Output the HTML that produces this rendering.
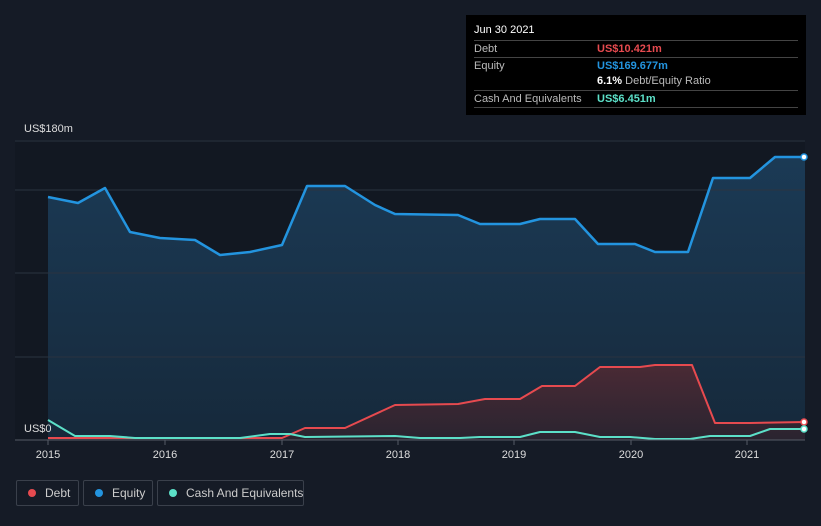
<!DOCTYPE html>
<html><head><style>
body{margin:0;width:821px;height:526px;background:#151b26;font-family:"Liberation Sans",sans-serif;overflow:hidden;position:relative}
.tt{position:absolute;left:466px;top:15px;width:340px;height:100px;background:#000;color:#bbb;font-size:11px}
.row{position:absolute;left:8px;width:324px;border-top:1px solid #444;height:16px;line-height:16px}
.leg{position:absolute;top:480px;height:26px;border:1px solid #3a404b;border-radius:2px;color:#ccc;font-size:12px;line-height:24px;box-sizing:border-box;padding-left:28px;white-space:nowrap}
.leg i{position:absolute;left:11px;top:8px;width:8px;height:8px;border-radius:50%}
</style></head><body>
<svg width="821" height="526" style="position:absolute;left:0;top:0">
<defs><linearGradient id="g" x1="0" y1="0" x2="0" y2="1"><stop offset="0" stop-color="#1b3a55"/><stop offset="1" stop-color="#16293b"/></linearGradient>
<linearGradient id="r" x1="0" y1="0" x2="0" y2="1"><stop offset="0" stop-color="#4a2a35"/><stop offset="1" stop-color="#2a2430"/></linearGradient></defs>
<rect x="15" y="140" width="790" height="300" fill="#121822"/>
<polygon fill="url(#g)" points="48,197 78,203 105,188 130,232 160,238 195,240 220,255 250,252 282,245 307,186 345,186 375,205 395,214 458,215 480,224 520,224 540,219 575,219 598,244 635,244 655,252 688,252 713,178 750,178 775,157 805,157 805,440 48,440"/>
<g stroke="#2b3340" stroke-width="1"><line x1="15" y1="141" x2="805" y2="141"/><line x1="15" y1="190" x2="805" y2="190"/><line x1="15" y1="273" x2="805" y2="273"/><line x1="15" y1="357" x2="805" y2="357"/></g>
<polygon fill="url(#r)" points="48,438 282,438 305,428 345,428 395,405 458,404 485,399 520,399 542,386 575,386 600,367 640,367 655,365 692,365 715,423 750,423 805,422 805,440 48,440"/>
<polyline fill="none" stroke="#2394df" stroke-width="2.5" stroke-linejoin="round" points="48,197 78,203 105,188 130,232 160,238 195,240 220,255 250,252 282,245 307,186 345,186 375,205 395,214 458,215 480,224 520,224 540,219 575,219 598,244 635,244 655,252 688,252 713,178 750,178 775,157 805,157"/>
<polyline fill="none" stroke="#e64a4f" stroke-width="2" stroke-linejoin="round" points="48,438 282,438 305,428 345,428 395,405 458,404 485,399 520,399 542,386 575,386 600,367 640,367 655,365 692,365 715,423 750,423 805,422"/>
<polyline fill="none" stroke="#5ce0c8" stroke-width="2" stroke-linejoin="round" points="48,420 75,436 110,436 135,438 240,438 270,434 290,434 305,437 395,436 420,438 460,438 480,437 520,437 540,432 575,432 600,437 630,437 655,439 690,439 710,436 750,436 770,429 805,429"/>
<line x1="15" y1="440" x2="805" y2="440" stroke="#555b66"/>
<g stroke="#555b66"><line x1="48" y1="440" x2="48" y2="445"/><line x1="165" y1="440" x2="165" y2="445"/><line x1="282" y1="440" x2="282" y2="445"/><line x1="398" y1="440" x2="398" y2="445"/><line x1="514" y1="440" x2="514" y2="445"/><line x1="631" y1="440" x2="631" y2="445"/><line x1="747" y1="440" x2="747" y2="445"/></g>
<circle cx="804" cy="157" r="3" fill="#fff" stroke="#2394df" stroke-width="1.5"/>
<circle cx="804" cy="422" r="3" fill="#fff" stroke="#e64a4f" stroke-width="1.5"/>
<circle cx="804" cy="429" r="3" fill="#fff" stroke="#5ce0c8" stroke-width="1.5"/>
<g fill="#ddd" font-size="11" font-family="Liberation Sans" text-anchor="middle"><text x="48" y="458">2015</text><text x="165" y="458">2016</text><text x="282" y="458">2017</text><text x="398" y="458">2018</text><text x="514" y="458">2019</text><text x="631" y="458">2020</text><text x="747" y="458">2021</text></g>
<text x="24" y="132" fill="#ddd" font-size="11">US$180m</text>
<text x="24" y="432" fill="#ddd" font-size="11">US$0</text>
</svg>
<div class="tt">
<div style="position:absolute;left:8px;top:9px;color:#fff;font-size:11px">Jun 30 2021</div>
<div class="row" style="top:25px">Debt<span style="position:absolute;left:123px;color:#e64a4f;font-weight:bold">US$10.421m</span></div>
<div class="row" style="top:42px">Equity<span style="position:absolute;left:123px;color:#2394df;font-weight:bold">US$169.677m</span></div>
<div class="row" style="top:58px;border:0"><span style="position:absolute;left:123px"><b style="color:#fff">6.1%</b> Debt/Equity Ratio</span></div>
<div class="row" style="top:75px">Cash And Equivalents<span style="position:absolute;left:123px;color:#5ce0c8;font-weight:bold">US$6.451m</span></div>
<div class="row" style="top:92px;height:0"></div>
</div>
<div class="leg" style="left:16px;width:63px"><i style="background:#e64a4f"></i>Debt</div>
<div class="leg" style="left:83px;width:70px"><i style="background:#2394df"></i>Equity</div>
<div class="leg" style="left:157px;width:147px"><i style="background:#5ce0c8"></i>Cash And Equivalents</div>
</body></html>
